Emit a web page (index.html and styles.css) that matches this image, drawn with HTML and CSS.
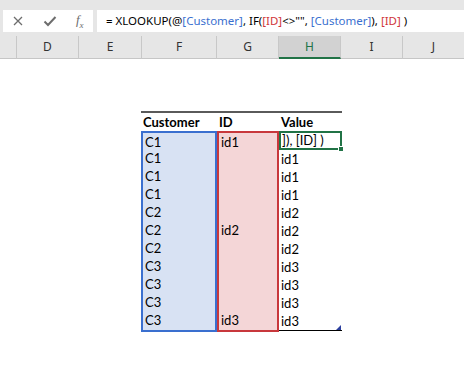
FILE: index.html
```html
<!DOCTYPE html>
<html lang="en">
<head>
	<meta charset="utf-8">
	<title>XLOOKUP</title>
	<link rel="stylesheet" href="styles.css">
</head>
<body>
	<div class="formula-bar">
		<div class="fx-box">
			<svg class="fx-icon" width="12" height="12" viewBox="0 0 12 12"><path d="M2 2 L10 10 M10 2 L2 10" stroke="#6d6d6d" stroke-width="1.3" fill="none"/></svg>
			<svg class="fx-icon" width="14" height="12" viewBox="0 0 14 12"><path d="M1.5 6.5 L5 10 L12.5 2" stroke="#6d6d6d" stroke-width="2" fill="none"/></svg>
			<span class="fx-label">f<sub>x</sub></span>
		</div>
		<div class="formula">= XLOOKUP(@<span class="ref-blue">[Customer]</span>, IF(<span class="ref-red">[ID]</span>&lt;&gt;"", <span class="ref-blue">[Customer]</span>), <span class="ref-red">[ID]</span> )</div>
	</div>
	<div class="col-headers">
		<div class="col-head"></div>
		<div class="col-head">D</div>
		<div class="col-head">E</div>
		<div class="col-head">F</div>
		<div class="col-head">G</div>
		<div class="col-head active">H</div>
		<div class="col-head">I</div>
		<div class="col-head">J</div>
	</div>
	<div class="sheet">
		<div class="xl-table">
			<div class="head-row">
				<div class="cell bold">Customer</div>
				<div class="cell bold">ID</div>
				<div class="cell bold">Value</div>
			</div>
			<div class="body-cols">
				<div class="col blue-ref">
					<div class="cell">C1</div>
					<div class="cell">C1</div>
					<div class="cell">C1</div>
					<div class="cell">C1</div>
					<div class="cell">C2</div>
					<div class="cell">C2</div>
					<div class="cell">C2</div>
					<div class="cell">C3</div>
					<div class="cell">C3</div>
					<div class="cell">C3</div>
					<div class="cell">C3</div>
				</div>
				<div class="col red-ref">
					<div class="cell">id1</div>
					<div class="cell"></div>
					<div class="cell"></div>
					<div class="cell"></div>
					<div class="cell"></div>
					<div class="cell">id2</div>
					<div class="cell"></div>
					<div class="cell"></div>
					<div class="cell"></div>
					<div class="cell"></div>
					<div class="cell">id3</div>
				</div>
				<div class="col value-col">
					<div class="cell active-cell">]), [ID] )<span class="fill-handle"></span></div>
					<div class="cell">id1</div>
					<div class="cell">id1</div>
					<div class="cell">id1</div>
					<div class="cell">id2</div>
					<div class="cell">id2</div>
					<div class="cell">id2</div>
					<div class="cell">id3</div>
					<div class="cell">id3</div>
					<div class="cell">id3</div>
					<div class="cell">id3<span class="resize-handle"></span></div>
				</div>
			</div>
		</div>
	</div>
</body>
</html>
```

FILE: styles.css
```css
body {
	margin: 0;
	background: #ffffff;
	font-family: "Lato", "Liberation Sans", sans-serif;
	color: #000000;
}

.formula-bar {
	display: flex;
	height: 36px;
	padding: 10px 0 0 3px;
	box-sizing: border-box;
	background: #e6e6e6;
}

.fx-box {
	display: flex;
	align-items: center;
	justify-content: space-around;
	width: 90px;
	height: 22px;
	background: #ffffff;
}

.fx-label {
	font-family: "Liberation Serif", serif;
	font-style: italic;
	font-size: 13px;
	color: #6d6d6d;
}

.fx-label sub {
	font-size: 9px;
}

.formula {
	flex: 1;
	height: 22px;
	margin-left: 4px;
	padding-left: 9px;
	background: #ffffff;
	font-family: "Noto Sans", sans-serif;
	font-size: 11.5px;
	line-height: 22px;
	white-space: nowrap;
	overflow: hidden;
}

.ref-blue {
	color: #3a6fcf;
}

.ref-red {
	color: #d0363a;
}

.col-headers {
	display: grid;
	grid-template-columns: 17px 62px 63px 75px 62px 62px 62px 62px;
	height: 23px;
	background: #e6e6e6;
	border-bottom: 1px solid #c6c6c6;
	box-sizing: border-box;
}

.col-head {
	border-right: 1px solid #c8c8c8;
	text-align: center;
	font-family: "Noto Sans", sans-serif;
	font-size: 12px;
	line-height: 22px;
	color: #333333;
}

.col-head.active {
	background: #d2d2d2;
	border-bottom: 2px solid #217346;
	color: #217346;
	line-height: 21px;
}

.sheet {
	padding: 52px 0 0 141px;
}

.xl-table {
	width: 201px;
	font-size: 13px;
}

.head-row {
	display: grid;
	grid-template-columns: 76px 62px 63px;
	border-top: 2px solid #5a5a5a;
}

.cell {
	position: relative;
	height: 18px;
	line-height: 18px;
	padding-left: 2px;
	white-space: nowrap;
}

.bold {
	font-weight: bold;
}

.body-cols {
	display: grid;
	grid-template-columns: 76px 62px 63px;
}

.col {
	box-sizing: border-box;
}

.blue-ref {
	background: #d8e2f3;
	border: 2px solid #3a6fcf;
}

.red-ref {
	background: #f4d6d7;
	border: 2px solid #c8383c;
}

.blue-ref .cell:first-child,
.red-ref .cell:first-child {
	height: 16px;
}

.value-col {
	border-bottom: 1px solid #000000;
	margin-bottom: 1px;
}

.active-cell {
	border: 2px solid #217346;
	height: 15px;
	line-height: 15px;
	padding-left: 1px;
}

.fill-handle {
	position: absolute;
	right: -4px;
	bottom: -4px;
	width: 4px;
	height: 4px;
	background: #217346;
	border: 1px solid #ffffff;
}

.resize-handle {
	position: absolute;
	right: 1px;
	bottom: 0;
	width: 0;
	height: 0;
	border-left: 5px solid transparent;
	border-bottom: 5px solid #2b3f9e;
}
```
